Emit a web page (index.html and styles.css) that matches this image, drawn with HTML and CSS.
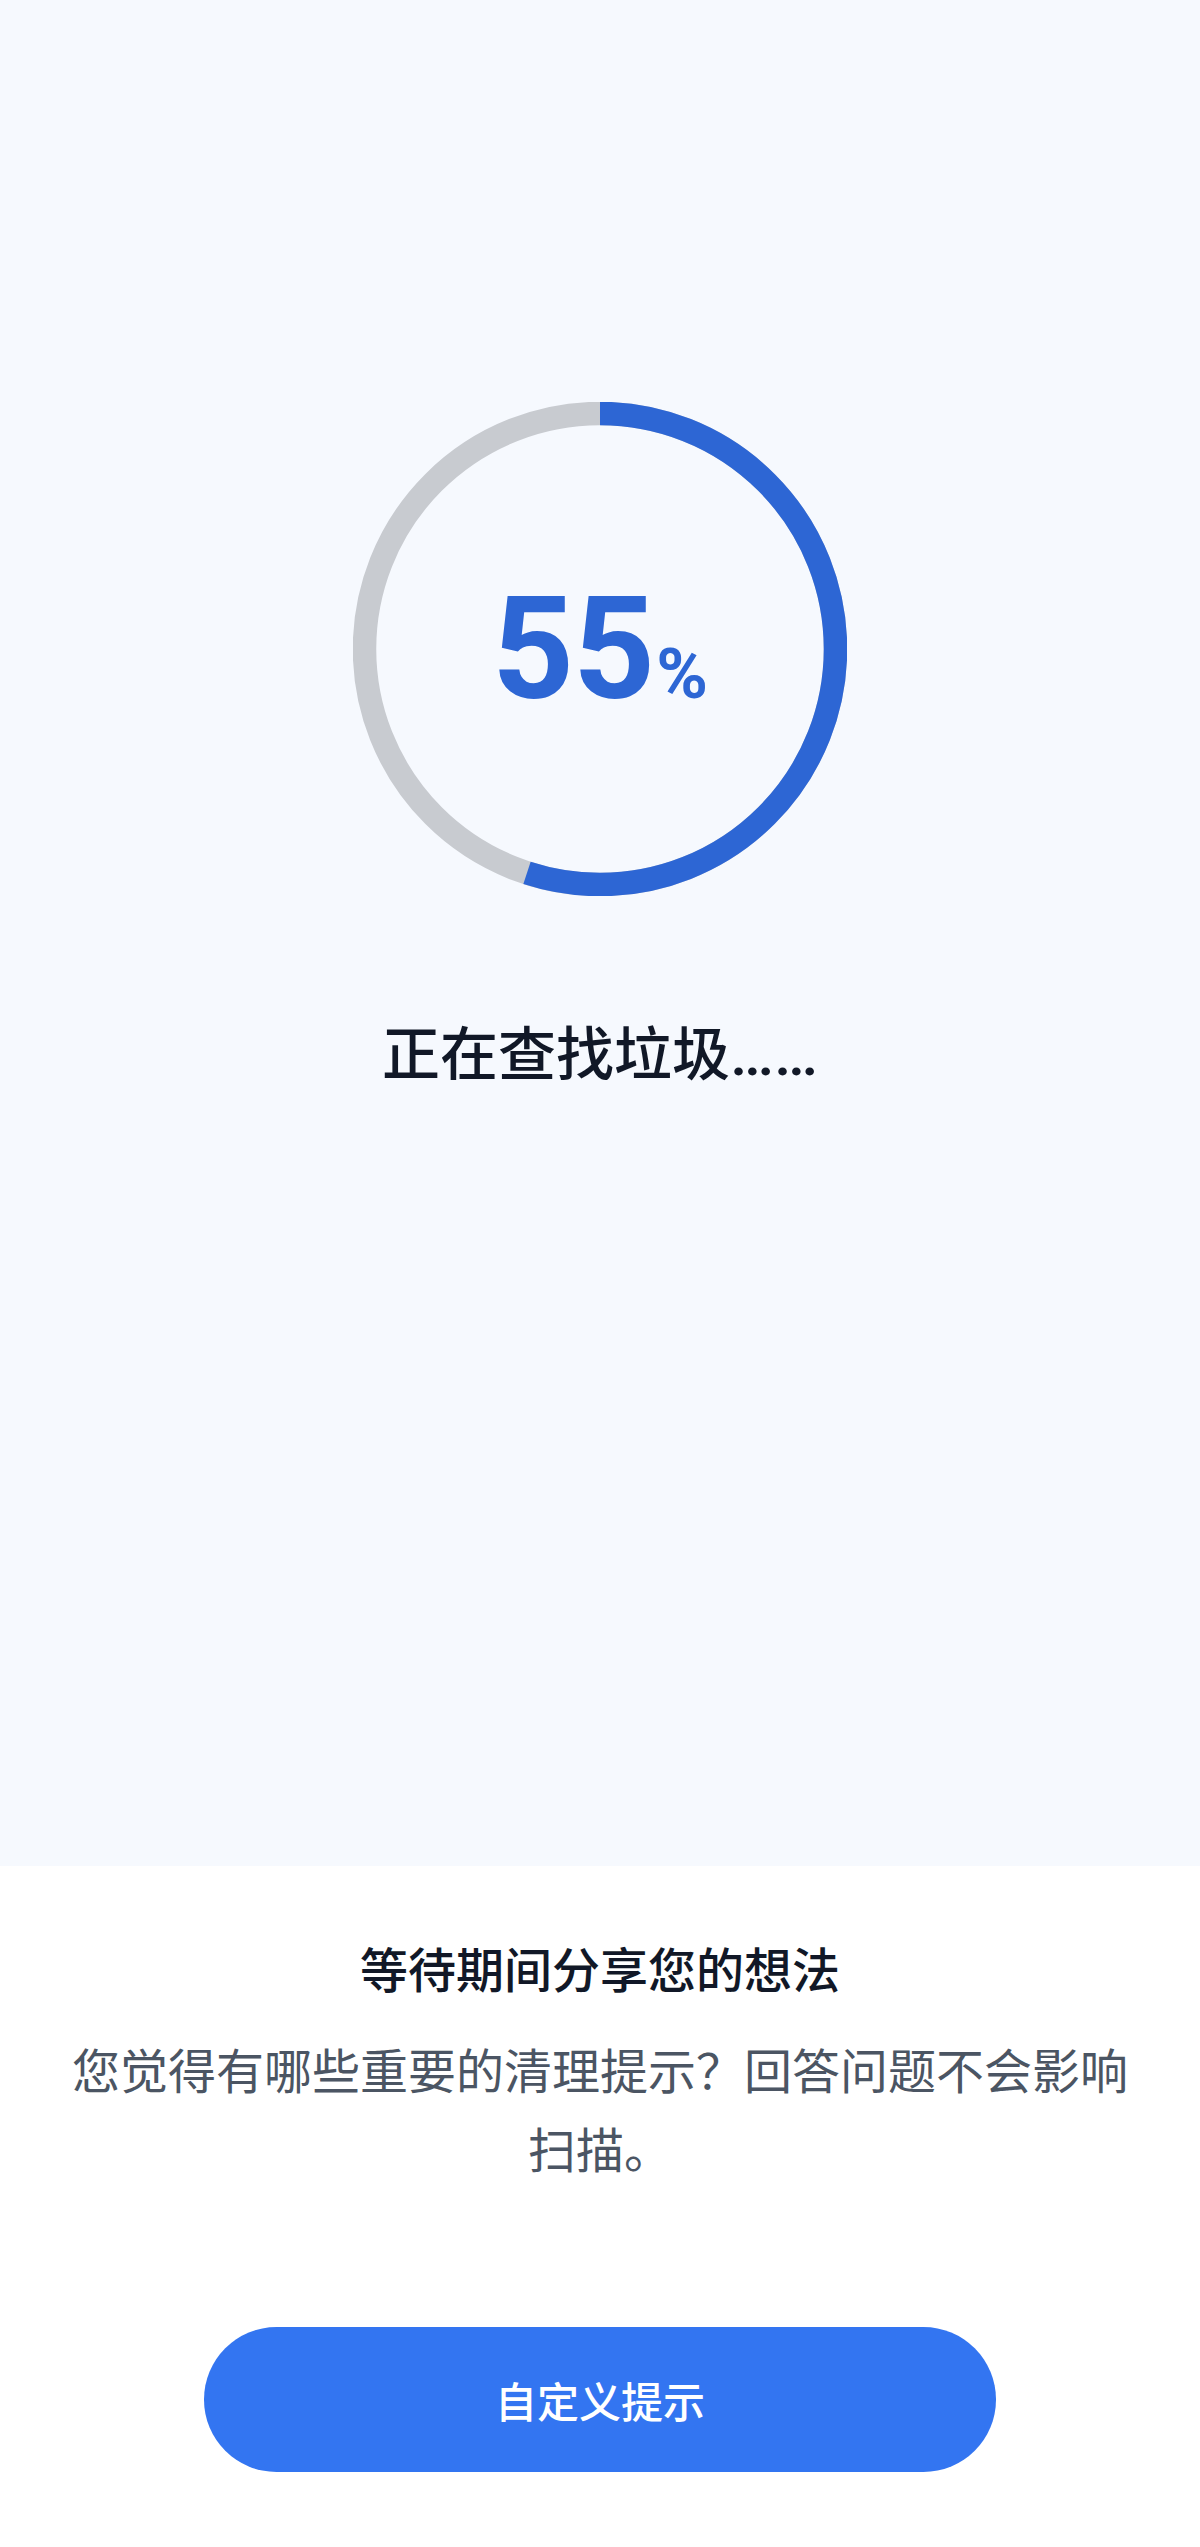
FILE: index.html
```html
<!DOCTYPE html>
<html lang="zh-CN">
<head>
<meta charset="utf-8">
<title>正在查找垃圾</title>
<link rel="stylesheet" href="styles.css">
</head>
<body>
<main class="page">
  <section class="scan">
    <div class="ring">
      <svg class="ring-svg" viewBox="0 0 494 494" width="494" height="494">
        <circle class="ring-track" cx="247" cy="247" r="235.5"></circle>
        <circle class="ring-bar" cx="247" cy="247" r="235.5" stroke-dasharray="813.8 1479.7" transform="rotate(-90 247 247)"></circle>
      </svg>
      <div class="ring-label"><span class="ring-num">55</span><span class="ring-pct">%</span></div>
    </div>
    <p class="status">正在查找垃圾<span class="dots">……</span></p>
  </section>
  <section class="share">
    <h2 class="share-title">等待期间分享您的想法</h2>
    <p class="share-desc">您觉得有哪些重要的清理提示？回答问题不会影响扫描。</p>
    <button class="share-btn" type="button">自定义提示</button>
  </section>
</main>
</body>
</html>
```

FILE: styles.css
```css
html, body {
  margin: 0;
  padding: 0;
}
body {
  font-family: "Roboto", "Noto Sans CJK SC", sans-serif;
  background: #ffffff;
  color: #111827;
}
.page {
  display: flex;
  flex-direction: column;
  min-height: 2547px;
}
.scan {
  height: 1866px;
  box-sizing: border-box;
  background: #f6f9fe;
  display: flex;
  flex-direction: column;
  align-items: center;
  padding-top: 402px;
}
.ring {
  display: grid;
  width: 494px;
  height: 494px;
}
.ring-svg, .ring-label {
  grid-area: 1 / 1;
}
.ring-track {
  fill: none;
  stroke: #c8cbd0;
  stroke-width: 23.5;
}
.ring-bar {
  fill: none;
  stroke: #2d66d4;
  stroke-width: 23.5;
}
.ring-label {
  display: flex;
  align-items: baseline;
  justify-content: center;
  align-self: center;
  color: #2d66d4;
  font-family: "Roboto", sans-serif;
  font-weight: 700;
  line-height: 1;
}
.ring-num {
  font-size: 143px;
  letter-spacing: -1px;
}
.ring-pct {
  font-size: 70px;
  margin-left: 2px;
}
.status {
  margin: 118px 0 0;
  font-size: 58px;
  font-weight: 500;
  line-height: 80px;
  color: #111827;
}
.dots {
  font-size: 62px;
}
.share {
  flex: 1;
  background: #ffffff;
  display: flex;
  flex-direction: column;
  align-items: center;
  text-align: center;
  padding: 72px 64px 0;
}
.share-title {
  margin: 0;
  font-size: 48px;
  font-weight: 500;
  line-height: 67px;
  color: #111827;
}
.share-desc {
  margin: 28px 0 0;
  font-size: 48px;
  font-weight: 400;
  line-height: 79px;
  color: #4b5563;
}
.share-btn {
  margin-top: 136px;
  width: 792px;
  height: 145px;
  border: 0;
  border-radius: 73px;
  background: #3375f1;
  color: #ffffff;
  font-family: "Roboto", "Noto Sans CJK SC", sans-serif;
  font-size: 42px;
  font-weight: 500;
}
```
